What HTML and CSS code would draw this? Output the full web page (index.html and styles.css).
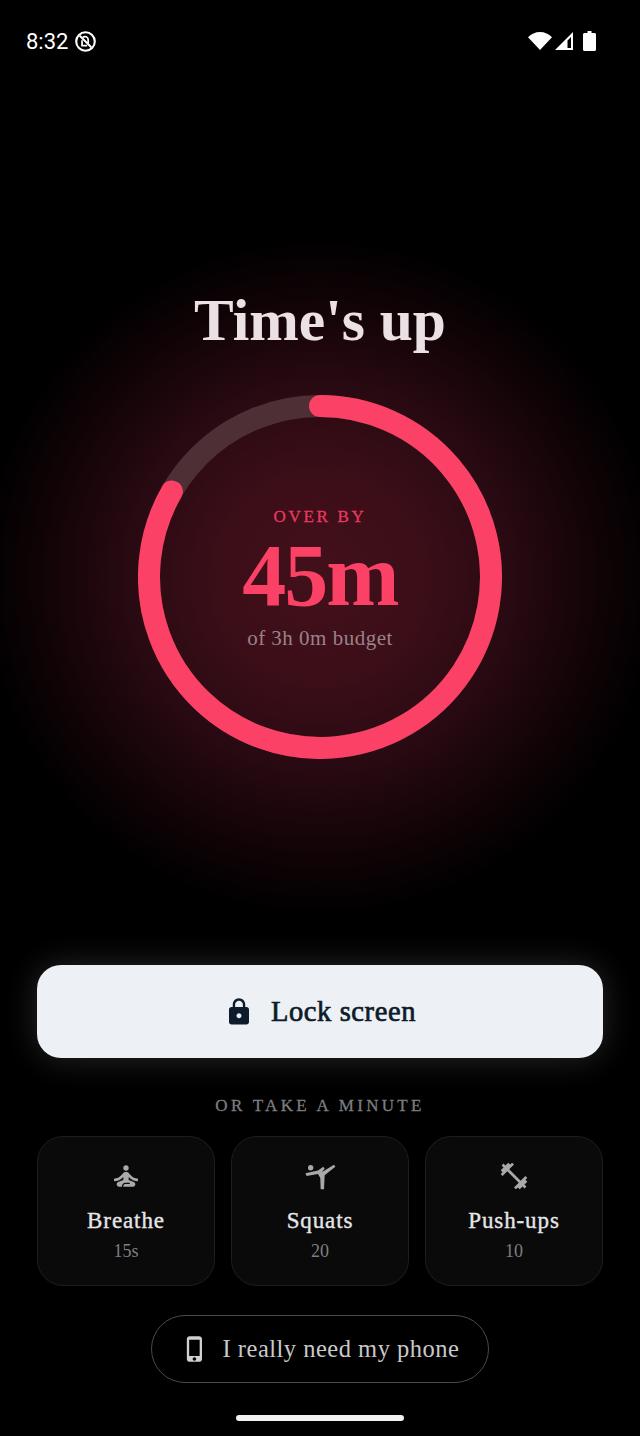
FILE: index.html
```html
<!DOCTYPE html>
<html>
<head>
    <title>Time's up</title>
    <link rel="stylesheet" href="styles.css">
</head>
<body>

<div class="screen">
    <div class="status-bar">
        <div class="status-left">
            <span class="clock">8:32</span>
            <svg class="dnd-icon" viewBox="0 0 24 24">
                <circle cx="12" cy="12" r="9.7" fill="none" stroke="#fff" stroke-width="2.2"/>
                <path d="M6 6l12 12" stroke="#fff" stroke-width="2"/>
                <path d="M9.200 7.800a3.300 3.300 0 0 1 5.600 2.300v3.700M8.400 10.600v5.600h5.400" fill="none" stroke="#fff" stroke-width="1.800"/>
            </svg>
        </div>
        <div class="status-right">
            <svg class="wifi-icon" viewBox="0 0 24 18"><path d="M12 18L0 5.200C3.200 2 7.400 0 12 0s8.800 2 12 5.200z" fill="#fff"/></svg>
            <svg class="signal-icon" viewBox="0 0 18 18">
                <path d="M0 18L18 0v18zM12.500 16h3.500V5l-3.500 3.500z" fill="#fff" fill-rule="evenodd"/>
            </svg>
            <svg class="battery-icon" viewBox="0 0 13 20"><path d="M4.500 0h4v2h3c.8 0 1.500.7 1.500 1.500v15c0 .8-.7 1.500-1.500 1.500h-10C.7 20 0 19.300 0 18.500v-15C0 2.700.7 2 1.500 2h3z" fill="#fff"/></svg>
        </div>
    </div>

    <div class="hero">
        <h1 class="title">Time's up</h1>
        <div class="ring-wrap">
            <svg class="ring" viewBox="0 0 364 364">
                <circle class="ring-track" cx="182" cy="182" r="171"/>
                <path class="ring-fill" d="M182 11A171 171 0 1 1 33.900 96.500"/>
            </svg>
            <div class="ring-text">
                <div class="over-label">OVER BY</div>
                <div class="over-value">45m</div>
                <div class="over-budget">of 3h 0m budget</div>
            </div>
        </div>
    </div>

    <div class="actions">
        <button class="lock-btn">
            <svg class="lock-icon" viewBox="0 0 24 24"><path d="M18 8h-1V6c0-2.760-2.240-5-5-5S7 3.240 7 6v2H6c-1.100 0-2 .9-2 2v10c0 1.100.9 2 2 2h12c1.100 0 2-.9 2-2V10c0-1.100-.9-2-2-2zm-6 9c-1.100 0-2-.9-2-2s.9-2 2-2 2 .9 2 2-.9 2-2 2zm3.100-9H8.900V6c0-1.710 1.390-3.100 3.100-3.100 1.710 0 3.100 1.390 3.100 3.100v2z"/></svg>
            Lock screen
        </button>

        <div class="minute-label">OR TAKE A MINUTE</div>

        <div class="cards">
            <div class="card">
                <svg class="card-icon" viewBox="0 0 24 24">
                    <circle cx="12" cy="6" r="2"/>
                    <path d="M21 16v-2c-2.240 0-4.160-.96-5.600-2.680l-1.340-1.600c-.38-.46-.94-.72-1.530-.72h-1.050c-.59 0-1.150.26-1.530.72l-1.340 1.600C7.160 13.040 5.240 14 3 14v2c2.770 0 5.190-1.170 7-3.250V15l-3.880 1.550c-.67.27-1.120.93-1.120 1.660C5 19.200 5.800 20 6.790 20H9v-.5c0-1.380 1.120-2.500 2.500-2.500h3c.28 0 .5.22.5.5s-.22.5-.5.500h-3c-.83 0-1.500.67-1.500 1.500v.5h7.210c.99 0 1.790-.8 1.790-1.790 0-.73-.45-1.390-1.120-1.660L14 15v-2.250c1.810 2.080 4.230 3.250 7 3.250z"/>
                </svg>
                <div class="card-name">Breathe</div>
                <div class="card-count">15s</div>
            </div>
            <div class="card">
                <svg class="card-icon" viewBox="0 0 24 24">
                    <circle cx="5" cy="5.800" r="2"/>
                    <path d="M1 10l9.500-2.200 4-2.800 1 1.300-2 2.700 9-5.500 1 1.500-8 6.500-.5 10.500h-2.500l-.3-8.500-1.700-3L2 12z"/>
                </svg>
                <div class="card-name">Squats</div>
                <div class="card-count">20</div>
            </div>
            <div class="card">
                <svg class="card-icon" viewBox="0 0 24 24"><path d="M20.570 14.860L22 13.430 20.570 12 17 15.570 8.430 7 12 3.430 10.570 2 9.140 3.430 7.710 2 5.570 4.140 4.140 2.710 2.710 4.140l1.430 1.430L2 7.710l1.430 1.430L2 10.570 3.430 12 7 8.430 15.570 17 12 20.570 13.430 22l1.430-1.430L16.290 22l2.140-2.140 1.430 1.430 1.430-1.430-1.430-1.430L22 16.290z"/></svg>
                <div class="card-name">Push-ups</div>
                <div class="card-count">10</div>
            </div>
        </div>

        <button class="phone-btn">
            <svg class="phone-icon" viewBox="0 0 24 24"><path d="M15.500 1h-8C6.120 1 5 2.120 5 3.500v17C5 21.880 6.120 23 7.500 23h8c1.380 0 2.500-1.120 2.500-2.500v-17C18 2.120 16.880 1 15.500 1zm-4 21c-.83 0-1.500-.67-1.500-1.500s.67-1.500 1.500-1.500 1.500.67 1.500 1.500-.67 1.500-1.500 1.500zm4.500-4H7V4h9v14z"/></svg>
            I really need my phone
        </button>
    </div>

    <div class="home-bar"></div>
</div>

</body>
</html>
```

FILE: styles.css
```css
* {
    box-sizing: border-box;
}

body {
    margin: 0;
    background: #000;
    font-family: "Liberation Serif", serif;
}

.screen {
    width: 640px;
    height: 1436px;
    display: flex;
    flex-direction: column;
    overflow: hidden;
    background: #000;
}

.status-bar {
    height: 82px;
    padding: 28px 44px 0 26px;
    display: flex;
    justify-content: space-between;
    align-items: flex-start;
}

.status-left {
    display: flex;
    align-items: center;
    gap: 6px;
    height: 26px;
}

.clock {
    font-family: Roboto, sans-serif;
    font-size: 22px;
    color: #fff;
}

.dnd-icon {
    width: 23px;
    height: 23px;
}

.status-right {
    display: flex;
    align-items: center;
    height: 26px;
}

.wifi-icon {
    width: 24px;
    height: 18px;
}

.signal-icon {
    width: 18px;
    height: 18px;
    margin-left: 3px;
}

.battery-icon {
    width: 13px;
    height: 20px;
    margin-left: 10px;
}

.hero {
    height: 858px;
    padding-top: 204px;
    display: flex;
    flex-direction: column;
    align-items: center;
    background: radial-gradient(circle 340px at 320px 495px, #42101b 0%, #3c0e18 30%, #2a0a12 55%, #100306 82%, #000 100%);
}

.title {
    margin: 0;
    font-size: 59.5px;
    line-height: 68px;
    font-weight: 700;
    color: #ebe0e4;
}

.ring-wrap {
    position: relative;
    width: 364px;
    height: 364px;
    margin-top: 41px;
}

.ring {
    display: block;
    width: 364px;
    height: 364px;
}

.ring-track {
    fill: none;
    stroke: #4d2f35;
    stroke-width: 22;
}

.ring-fill {
    fill: none;
    stroke: #fb4166;
    stroke-width: 22;
    stroke-linecap: round;
}

.ring-text {
    position: absolute;
    inset: 0;
    padding-top: 111px;
    display: flex;
    flex-direction: column;
    align-items: center;
}

.over-label {
    font-size: 17px;
    line-height: 22px;
    letter-spacing: 2.7px;
    -webkit-text-stroke: 0.3px #e8395f;
    color: #e8395f;
}

.over-value {
    font-size: 88px;
    line-height: 84px;
    margin-top: 6px;
    font-weight: 700;
    letter-spacing: -2px;
    color: #fb4166;
}

.over-budget {
    font-size: 21px;
    line-height: 26px;
    margin-top: 7px;
    letter-spacing: 0.5px;
    color: #9a8288;
}

.actions {
    padding: 25px 37px 0;
    display: flex;
    flex-direction: column;
    align-items: center;
}

.lock-btn {
    width: 566px;
    height: 93px;
    border: none;
    border-radius: 24px;
    background: #edf0f4;
    color: #0e1b2b;
    font-family: inherit;
    font-size: 28.5px;
    letter-spacing: 0.6px;
    -webkit-text-stroke: 0.7px #0e1b2b;
    display: flex;
    align-items: center;
    justify-content: center;
    gap: 17px;
    box-shadow: 0 0 32px rgba(255, 255, 255, 0.16);
}

.lock-icon {
    width: 30px;
    height: 30px;
    fill: #0e1b2b;
    stroke: none;
}

.minute-label {
    margin-top: 38px;
    font-size: 17px;
    line-height: 20px;
    letter-spacing: 3.3px;
    -webkit-text-stroke: 0.3px #7d7d80;
    color: #7d7d80;
}

.cards {
    width: 100%;
    margin-top: 20px;
    display: grid;
    grid-template-columns: repeat(3, 1fr);
    gap: 16px;
}

.card {
    height: 150px;
    padding-top: 23px;
    border: 1px solid #1e1e20;
    border-radius: 26px;
    background: #0a0a0b;
    display: flex;
    flex-direction: column;
    align-items: center;
}

.card-icon {
    width: 32px;
    height: 32px;
    fill: #a9a9aa;
}

.card-name {
    margin-top: 15px;
    font-size: 23px;
    line-height: 28px;
    letter-spacing: 0.9px;
    -webkit-text-stroke: 0.35px #e6e6e8;
    color: #e6e6e8;
}

.card-count {
    margin-top: 5px;
    font-size: 18px;
    line-height: 22px;
    color: #7f7f82;
}

.phone-btn {
    width: 338px;
    height: 68px;
    margin-top: 29px;
    border: 1.5px solid #4a4a4c;
    border-radius: 34px;
    background: #000;
    color: #c9c9cb;
    font-family: inherit;
    font-size: 24.5px;
    letter-spacing: 0.5px;
    display: flex;
    align-items: center;
    justify-content: center;
    gap: 14px;
}

.phone-icon {
    width: 28px;
    height: 28px;
    fill: #d0d0d2;
}

.home-bar {
    width: 168px;
    height: 6px;
    margin: 32px auto 0;
    border-radius: 3px;
    background: #f2f2f2;
}
```
